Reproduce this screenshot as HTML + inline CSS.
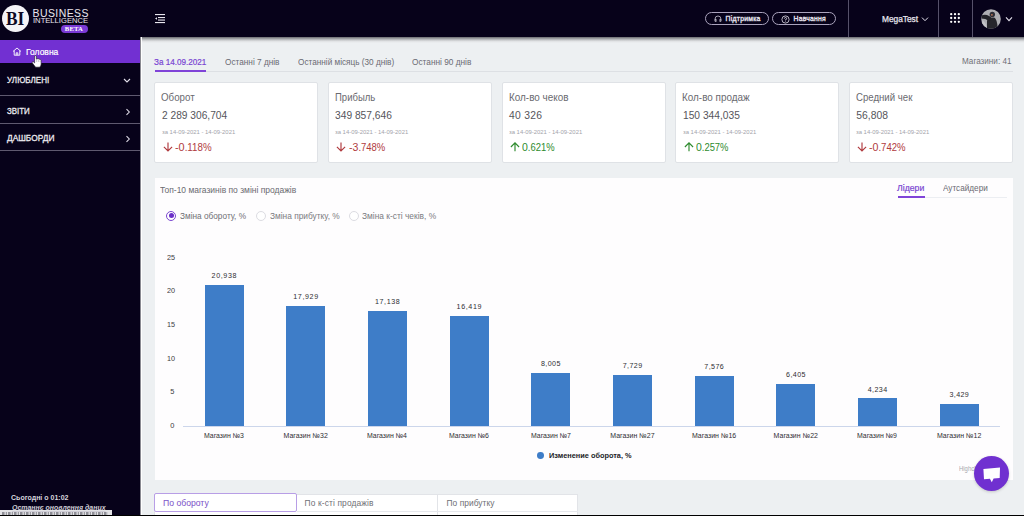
<!DOCTYPE html>
<html><head><meta charset="utf-8">
<style>
*{margin:0;padding:0;box-sizing:border-box}
html,body{width:1024px;height:516px;overflow:hidden}
body{position:relative;background:#edf0f2;font-family:"Liberation Sans",sans-serif}
.a{position:absolute}
.t{position:absolute;white-space:pre}
.bar{position:absolute;background:#3e7dc8}
.card{position:absolute;background:#fff;border:1px solid #dfe2e6;border-radius:2px}
</style></head><body>
<!-- header -->
<div class="a" style="left:0;top:0;width:1024px;height:37px;background:#07021a"></div>
<div class="a" style="left:140px;top:36.6px;width:884px;height:6px;background:linear-gradient(#6a6a70 0%,#9a9ca0 25%,#c6c8ca 50%,#e2e4e6 75%,#edf0f2 100%)"></div>
<!-- sidebar -->
<div class="a" style="left:0;top:37px;width:140px;height:479px;background:#07021a"></div>
<div class="a" style="left:140px;top:37px;width:1px;height:479px;background:#8a8a92"></div>
<div class="a" style="left:141px;top:37px;width:1px;height:479px;background:#ffffff"></div>
<div class="a" style="left:0;top:39.6px;width:140px;height:23.5px;background:#7230d2"></div>
<div class="a" style="left:0;top:95px;width:140px;height:1px;background:#5f5a70"></div>
<div class="a" style="left:0;top:122.7px;width:140px;height:1px;background:#5f5a70"></div>
<div class="a" style="left:0;top:150px;width:140px;height:1px;background:#5f5a70"></div>
<!-- logo -->
<div class="a" style="left:1.8px;top:4.9px;width:27.4px;height:27.4px;border-radius:50%;background:#f4f3f7"></div>
<div class="a" style="left:60.5px;top:25.2px;width:27px;height:7.8px;border-radius:4px;background:#7a3ad6"></div>
<!-- hamburger -->
<svg class="a" style="left:154px;top:13px" width="13" height="11" viewBox="0 0 13 11">
<rect x="1" y="1" width="10" height="1.1" fill="#e8e6ee"/>
<rect x="4" y="4" width="7" height="1.1" fill="#e8e6ee"/>
<rect x="4" y="6.5" width="7" height="1.1" fill="#e8e6ee"/>
<rect x="1" y="9" width="10" height="1.1" fill="#e8e6ee"/>
<path d="M1 5.5 L3 4.2 L3 6.8 Z" fill="#e8e6ee"/>
</svg>
<!-- header buttons -->
<div class="a" style="left:705px;top:12px;width:64px;height:12.8px;border:1px solid #aaa3bd;border-radius:7px"></div>
<div class="a" style="left:772.4px;top:12px;width:63.3px;height:12.8px;border:1px solid #aaa3bd;border-radius:7px"></div>
<svg class="a" style="left:713.5px;top:14.5px" width="8" height="7" viewBox="0 0 8 7">
<path d="M1.1 5.8 V3.9 A2.9 2.9 0 0 1 6.9 3.9 V5.8" fill="none" stroke="#e4e1ec" stroke-width="0.7"/>
<path d="M1.1 4.3 H2.2 V6.5 H1.1 Z M5.8 4.3 H6.9 V6.5 H5.8 Z" fill="none" stroke="#e4e1ec" stroke-width="0.6"/>
</svg>
<svg class="a" style="left:781px;top:14.5px" width="9" height="9" viewBox="0 0 9 9">
<circle cx="4.5" cy="4.5" r="3.6" fill="none" stroke="#e4e1ec" stroke-width="0.8"/>
<path d="M3.4 3.6 A1.1 1.1 0 1 1 4.5 4.7 V5.4" fill="none" stroke="#e4e1ec" stroke-width="0.8"/>
<circle cx="4.5" cy="6.4" r="0.45" fill="#e4e1ec"/>
</svg>
<!-- header dividers -->
<div class="a" style="left:847.5px;top:0;width:1.2px;height:37px;background:#56516a"></div>
<div class="a" style="left:938px;top:0;width:1.2px;height:37px;background:#56516a"></div>
<div class="a" style="left:972px;top:0;width:1.2px;height:37px;background:#56516a"></div>
<svg class="a" style="left:920px;top:16px" width="10" height="7" viewBox="0 0 10 7">
<path d="M2 1.6 L5 4.7 L8 1.6" fill="none" stroke="#e4e1ec" stroke-width="1"/></svg>
<svg class="a" style="left:1004px;top:16px" width="10" height="7" viewBox="0 0 10 7">
<path d="M2 1.4 L5 4.6 L8 1.4" fill="none" stroke="#e4e1ec" stroke-width="1.1"/></svg>
<svg class="a" style="left:950.4px;top:13.2px" width="10" height="10" viewBox="0 0 10 10" fill="#ffffff">
<circle cx="1.2" cy="1.2" r="1.15"/><circle cx="5" cy="1.2" r="1.15"/><circle cx="8.8" cy="1.2" r="1.15"/>
<circle cx="1.2" cy="5" r="1.15"/><circle cx="5" cy="5" r="1.15"/><circle cx="8.8" cy="5" r="1.15"/>
<circle cx="1.2" cy="8.8" r="1.15"/><circle cx="5" cy="8.8" r="1.15"/><circle cx="8.8" cy="8.8" r="1.15"/>
</svg>
<!-- avatar -->
<svg class="a" style="left:981.2px;top:8.8px" width="20" height="20" viewBox="0 0 20 20">
<defs><clipPath id="cc"><circle cx="10" cy="10" r="9.8"/></clipPath></defs>
<circle cx="10" cy="10" r="9.8" fill="#aeaeb3"/>
<g clip-path="url(#cc)">
<path d="M6 20 L6 12 Q6.5 8.6 10 8.6 L13.2 8.6 Q16.2 10 16.8 20 Z" fill="#26262c"/>
<path d="M0.3 6.6 Q3 5.4 6 6.1 L10 8 L9 12.5 L4.2 10 L0.3 9.6 Z" fill="#222228"/>
<circle cx="11.3" cy="5.4" r="2.7" fill="#2e2e36"/>
<circle cx="10.9" cy="5.8" r="0.9" fill="#c07858"/>
<path d="M1.5 11 Q5 13.5 6 20 L0 20 Z" fill="#c4c4c8"/>
</g></svg>
<!-- sidebar icons -->
<svg class="a" style="left:11.5px;top:47px" width="10" height="9" viewBox="0 0 10 9">
<path d="M1 4.5 L5 1 L9 4.5 M2.2 3.6 V8.2 H7.8 V3.6 M4.2 8.2 V5.8 H5.8 V8.2" fill="none" stroke="#ffffff" stroke-width="0.9"/></svg>
<svg class="a" style="left:123px;top:76.5px" width="8" height="7" viewBox="0 0 8 7">
<path d="M1 2 L4 5 L7 2" fill="none" stroke="#e4e1ec" stroke-width="1.1"/></svg>
<svg class="a" style="left:124.5px;top:107.5px" width="6" height="8" viewBox="0 0 6 8">
<path d="M1.5 1.2 L4.3 4 L1.5 6.8" fill="none" stroke="#e4e1ec" stroke-width="1.05"/></svg>
<svg class="a" style="left:124.5px;top:135.2px" width="6" height="8" viewBox="0 0 6 8">
<path d="M1.5 1.2 L4.3 4 L1.5 6.8" fill="none" stroke="#e4e1ec" stroke-width="1.05"/></svg>
<!-- cursor -->
<svg class="a" style="left:31px;top:54px" width="12" height="14" viewBox="0 0 12 14">
<path d="M3.6 2 Q4.4 0.9 5.3 2 L5.4 5.2 Q6.1 4.5 7 4.9 Q7.8 4.6 8.5 5.3 Q9.5 5.1 10.1 6.2 L10.2 10 Q10 12.3 8.6 13.2 L4.6 13.2 L1.2 8.8 Q0.8 7.4 2.3 7.7 L3.6 8.9 Z" fill="#ffffff" stroke="#1a1a22" stroke-width="0.6"/>
<path d="M5.6 6 L5.6 8 M7.4 5.8 L7.4 8 M9.1 6.4 L9.1 8" stroke="#9a9aa2" stroke-width="0.5"/>
</svg>
<!-- status bar -->
<div class="a" style="left:0;top:509.8px;width:112.4px;height:5.4px;background:#e2e2e5"></div>
<div class="a" style="left:2px;top:512.4px;width:106px;height:2.6px;background:repeating-linear-gradient(90deg,#8e8e96 0 2px,#b4b4ba 2px 3px,#d0d0d5 3px 4px,#9a9aa0 4px 5px,#e2e2e5 5px 6px)"></div>
<!-- tabs -->
<div class="a" style="left:155px;top:70.6px;width:858px;height:1px;background:#dde0e4"></div>
<div class="a" style="left:154.8px;top:69.8px;width:51.4px;height:2px;background:#8044d8"></div>
<!-- cards -->
<div class="card" style="left:154.4px;top:81.8px;width:164px;height:81.2px"></div>
<div class="card" style="left:328.0px;top:81.8px;width:164px;height:81.2px"></div>
<div class="card" style="left:501.6px;top:81.8px;width:164px;height:81.2px"></div>
<div class="card" style="left:675.2px;top:81.8px;width:164px;height:81.2px"></div>
<div class="card" style="left:848.8px;top:81.8px;width:164px;height:81.2px"></div>
<!-- card arrows -->
<svg class="a" style="left:162.80px;top:142.2px" width="10" height="10" viewBox="0 0 10 10"><path d="M5 0.6 V8.8 M0.9 4.8 L5 8.9 L9.1 4.8" fill="none" stroke="#b03a3e" stroke-width="1.15"/></svg>
<svg class="a" style="left:336.40px;top:142.2px" width="10" height="10" viewBox="0 0 10 10"><path d="M5 0.6 V8.8 M0.9 4.8 L5 8.9 L9.1 4.8" fill="none" stroke="#b03a3e" stroke-width="1.15"/></svg>
<svg class="a" style="left:510.00px;top:142.2px" width="10" height="10" viewBox="0 0 10 10"><path d="M5 1.0 V9.2 M0.9 5.0 L5 0.9 L9.1 5.0" fill="none" stroke="#2e8b2e" stroke-width="1.15"/></svg>
<svg class="a" style="left:683.60px;top:142.2px" width="10" height="10" viewBox="0 0 10 10"><path d="M5 1.0 V9.2 M0.9 5.0 L5 0.9 L9.1 5.0" fill="none" stroke="#2e8b2e" stroke-width="1.15"/></svg>
<svg class="a" style="left:857.20px;top:142.2px" width="10" height="10" viewBox="0 0 10 10"><path d="M5 0.6 V8.8 M0.9 4.8 L5 8.9 L9.1 4.8" fill="none" stroke="#b03a3e" stroke-width="1.15"/></svg>

<!-- chart panel -->
<div class="a" style="left:154.5px;top:177.5px;width:858.5px;height:302px;background:#fefdfe"></div>
<div class="a" style="left:898px;top:196.5px;width:109px;height:1px;background:#eceef2"></div>
<div class="a" style="left:898px;top:195.8px;width:26.5px;height:2px;background:#8044d8"></div>
<!-- radios -->
<div class="a" style="left:166px;top:210.5px;width:10.2px;height:10.2px;border:1px solid #7a45d0;border-radius:50%;background:#fff"></div>
<div class="a" style="left:168.6px;top:213.1px;width:5px;height:5px;border-radius:50%;background:#6a2fc8"></div>
<div class="a" style="left:256px;top:210.5px;width:10.2px;height:10.2px;border:1px solid #dcdce2;border-radius:50%;background:#fff"></div>
<div class="a" style="left:349px;top:210.5px;width:10.2px;height:10.2px;border:1px solid #dcdce2;border-radius:50%;background:#fff"></div>
<!-- axis -->
<div class="a" style="left:183.3px;top:425.8px;width:817px;height:1px;background:#ccd6eb"></div>
<div class="bar" style="left:204.50px;top:285.14px;width:39.00px;height:141.26px"></div><div class="bar" style="left:286.18px;top:305.54px;width:39.00px;height:120.86px"></div><div class="bar" style="left:367.86px;top:310.90px;width:39.00px;height:115.50px"></div><div class="bar" style="left:449.54px;top:315.78px;width:39.00px;height:110.62px"></div><div class="bar" style="left:531.22px;top:372.83px;width:39.00px;height:53.57px"></div><div class="bar" style="left:612.90px;top:374.70px;width:39.00px;height:51.70px"></div><div class="bar" style="left:694.58px;top:375.73px;width:39.00px;height:50.67px"></div><div class="bar" style="left:776.26px;top:383.67px;width:39.00px;height:42.73px"></div><div class="bar" style="left:857.94px;top:398.39px;width:39.00px;height:28.01px"></div><div class="bar" style="left:939.62px;top:403.85px;width:39.00px;height:22.55px"></div>
<div class="a" style="left:537.3px;top:452.2px;width:6.8px;height:6.8px;border-radius:50%;background:#3e7dc8"></div>
<!-- bottom tabs -->
<div class="a" style="left:154px;top:493.5px;width:424px;height:24px;background:#fff;border:1px solid #e2e4e8"></div>
<div class="a" style="left:437.2px;top:494px;width:1px;height:22px;background:#e2e4e8"></div>
<div class="a" style="left:297px;top:511.2px;width:281px;height:1px;background:#e6e8ec"></div>
<div class="a" style="left:154px;top:493.3px;width:142.8px;height:18.5px;border:1.1px solid #b89ee6;border-radius:2px;background:#fff"></div>
<span class="t" style="left:6.23px;top:8.58px;font-size:19.49px;line-height:19.49px;color:#0d0822;transform:scaleX(0.8874);transform-origin:0 0;font-weight:700;font-family:'Liberation Serif',serif">BI</span>
<span class="t" style="left:32.57px;top:8.84px;font-size:10.47px;line-height:10.47px;color:#e9e7ef;letter-spacing:0.429px">BUSINESS</span>
<span class="t" style="left:32.71px;top:17.24px;font-size:8.10px;line-height:8.10px;color:#e9e7ef;transform:scaleX(0.9424);transform-origin:0 0">INTELLIGENCE</span>
<span class="t" style="left:64.80px;top:26.03px;font-size:6.65px;line-height:6.65px;color:#ffffff;letter-spacing:0.168px;font-weight:700;font-family:'Liberation Serif',serif">BETA</span>
<span class="t" style="left:725.59px;top:15.91px;font-size:6.84px;line-height:6.84px;color:#e4e1ec;letter-spacing:0.255px;-webkit-text-stroke:0.35px #e4e1ec">Підтримка</span>
<span class="t" style="left:793.59px;top:15.91px;font-size:6.84px;line-height:6.84px;color:#e4e1ec;letter-spacing:0.209px;-webkit-text-stroke:0.35px #e4e1ec">Навчання</span>
<span class="t" style="left:881.80px;top:14.71px;font-size:8.38px;line-height:8.38px;color:#e9e7ef;transform:scaleX(0.9941);transform-origin:0 0;-webkit-text-stroke:0.25px #e9e7ef">MegaTest</span>
<span class="t" style="left:26.14px;top:48.38px;font-size:9.36px;line-height:9.36px;color:#ffffff;transform:scaleX(0.9105);transform-origin:0 0;-webkit-text-stroke:0.2px #ffffff">Головна</span>
<span class="t" style="left:7.24px;top:75.58px;font-size:9.36px;line-height:9.36px;color:#ecebf0;transform:scaleX(0.8618);transform-origin:0 0;-webkit-text-stroke:0.3px #ecebf0">УЛЮБЛЕНІ</span>
<span class="t" style="left:7.14px;top:106.58px;font-size:9.36px;line-height:9.36px;color:#ecebf0;transform:scaleX(0.8455);transform-origin:0 0;-webkit-text-stroke:0.3px #ecebf0">ЗВІТИ</span>
<span class="t" style="left:7.14px;top:134.48px;font-size:9.36px;line-height:9.36px;color:#ecebf0;transform:scaleX(0.8931);transform-origin:0 0;-webkit-text-stroke:0.3px #ecebf0">ДАШБОРДИ</span>
<span class="t" style="left:11.27px;top:494.97px;font-size:7.12px;line-height:7.12px;color:#d8d6de;transform:scaleX(0.9864);transform-origin:0 0;font-weight:700">Сьогодні о 01:02</span>
<span class="t" style="left:11.54px;top:504.00px;font-size:7.68px;line-height:7.68px;color:#cfcdd6;transform:scaleX(0.9069);transform-origin:0 0;font-weight:700;font-style:italic;text-decoration:underline">Останнє оновлення даних</span>
<span class="t" style="left:154.06px;top:57.93px;font-size:8.94px;line-height:8.94px;color:#7a45d2;transform:scaleX(0.9112);transform-origin:0 0;-webkit-text-stroke:0.2px #7a45d2">За 14.09.2021</span>
<span class="t" style="left:224.96px;top:57.93px;font-size:8.94px;line-height:8.94px;color:#6b6b73;transform:scaleX(0.9241);transform-origin:0 0">Останні 7 днів</span>
<span class="t" style="left:298.26px;top:57.93px;font-size:8.94px;line-height:8.94px;color:#6b6b73;transform:scaleX(0.9205);transform-origin:0 0">Останній місяць (30 днів)</span>
<span class="t" style="left:412.16px;top:57.93px;font-size:8.94px;line-height:8.94px;color:#6b6b73;transform:scaleX(0.9276);transform-origin:0 0">Останні 90 днів</span>
<span class="t" style="left:962.48px;top:57.47px;font-size:8.66px;line-height:8.66px;color:#6f6f76;transform:scaleX(0.9393);transform-origin:0 0">Магазини: 41</span>
<span class="t" style="left:161.49px;top:93.17px;font-size:10.20px;line-height:10.20px;color:#6a6a70;transform:scaleX(0.9565);transform-origin:0 0">Оборот</span>
<span class="t" style="left:161.88px;top:111.25px;font-size:10.34px;line-height:10.34px;color:#55555b;transform:scaleX(0.9873);transform-origin:0 0">2 289 306,704</span>
<span class="t" style="left:161.74px;top:129.01px;font-size:6.01px;line-height:6.01px;color:#a3a3aa;transform:scaleX(0.9829);transform-origin:0 0">за 14-09-2021 - 14-09-2021</span>
<span class="t" style="left:174.92px;top:141.93px;font-size:11.31px;line-height:11.31px;color:#b03a3e;transform:scaleX(0.9609);transform-origin:0 0">-0<span style="font-size:90%">.118%</span></span>
<span class="t" style="left:335.09px;top:93.17px;font-size:10.20px;line-height:10.20px;color:#6a6a70;transform:scaleX(0.9338);transform-origin:0 0">Прибыль</span>
<span class="t" style="left:335.48px;top:111.25px;font-size:10.34px;line-height:10.34px;color:#55555b;transform:scaleX(0.9912);transform-origin:0 0">349 857,646</span>
<span class="t" style="left:335.34px;top:129.01px;font-size:6.01px;line-height:6.01px;color:#a3a3aa;transform:scaleX(0.9829);transform-origin:0 0">за 14-09-2021 - 14-09-2021</span>
<span class="t" style="left:348.52px;top:141.93px;font-size:11.31px;line-height:11.31px;color:#b03a3e;transform:scaleX(0.9333);transform-origin:0 0">-3<span style="font-size:90%">.748%</span></span>
<span class="t" style="left:508.69px;top:93.17px;font-size:10.20px;line-height:10.20px;color:#6a6a70;transform:scaleX(0.9730);transform-origin:0 0">Кол-во чеков</span>
<span class="t" style="left:509.08px;top:111.25px;font-size:10.34px;line-height:10.34px;color:#55555b;letter-spacing:0.249px">40 326</span>
<span class="t" style="left:508.94px;top:129.01px;font-size:6.01px;line-height:6.01px;color:#a3a3aa;transform:scaleX(0.9829);transform-origin:0 0">за 14-09-2021 - 14-09-2021</span>
<span class="t" style="left:522.12px;top:141.93px;font-size:11.31px;line-height:11.31px;color:#2e8b2e;transform:scaleX(0.9273);transform-origin:0 0">0<span style="font-size:90%">.621%</span></span>
<span class="t" style="left:682.29px;top:93.17px;font-size:10.20px;line-height:10.20px;color:#6a6a70;transform:scaleX(0.9731);transform-origin:0 0">Кол-во продаж</span>
<span class="t" style="left:682.68px;top:111.25px;font-size:10.34px;line-height:10.34px;color:#55555b;transform:scaleX(0.9894);transform-origin:0 0">150 344,035</span>
<span class="t" style="left:682.54px;top:129.01px;font-size:6.01px;line-height:6.01px;color:#a3a3aa;transform:scaleX(0.9829);transform-origin:0 0">за 14-09-2021 - 14-09-2021</span>
<span class="t" style="left:695.72px;top:141.93px;font-size:11.31px;line-height:11.31px;color:#2e8b2e;transform:scaleX(0.9244);transform-origin:0 0">0<span style="font-size:90%">.257%</span></span>
<span class="t" style="left:855.89px;top:93.17px;font-size:10.20px;line-height:10.20px;color:#6a6a70;transform:scaleX(0.9442);transform-origin:0 0">Средний чек</span>
<span class="t" style="left:856.28px;top:111.25px;font-size:10.34px;line-height:10.34px;color:#55555b;letter-spacing:0.029px">56,808</span>
<span class="t" style="left:856.14px;top:129.01px;font-size:6.01px;line-height:6.01px;color:#a3a3aa;transform:scaleX(0.9829);transform-origin:0 0">за 14-09-2021 - 14-09-2021</span>
<span class="t" style="left:869.32px;top:141.93px;font-size:11.31px;line-height:11.31px;color:#b03a3e;transform:scaleX(0.9413);transform-origin:0 0">-0<span style="font-size:90%">.742%</span></span>
<span class="t" style="left:160.28px;top:186.47px;font-size:8.66px;line-height:8.66px;color:#6a6a70;transform:scaleX(0.9789);transform-origin:0 0">Топ-10 магазинів по зміні продажів</span>
<span class="t" style="left:897.44px;top:183.98px;font-size:9.36px;line-height:9.36px;color:#7a45d2;transform:scaleX(0.9305);transform-origin:0 0;-webkit-text-stroke:0.2px #7a45d2">Лідери</span>
<span class="t" style="left:943.04px;top:183.98px;font-size:9.36px;line-height:9.36px;color:#6b6b73;transform:scaleX(0.8757);transform-origin:0 0">Аутсайдери</span>
<span class="t" style="left:180.44px;top:212.08px;font-size:9.36px;line-height:9.36px;color:#707076;transform:scaleX(0.8840);transform-origin:0 0">Зміна обороту, %</span>
<span class="t" style="left:270.04px;top:212.08px;font-size:9.36px;line-height:9.36px;color:#7c7c82;transform:scaleX(0.8924);transform-origin:0 0">Зміна прибутку, %</span>
<span class="t" style="left:362.04px;top:212.08px;font-size:9.36px;line-height:9.36px;color:#7c7c82;transform:scaleX(0.8969);transform-origin:0 0">Зміна к-сті чеків, %</span>
<span class="t" style="left:166.86px;top:253.69px;font-size:7.40px;line-height:7.40px;color:#3c3c40;transform:scaleX(0.9801);transform-origin:0 0">25</span>
<span class="t" style="left:166.86px;top:287.39px;font-size:7.40px;line-height:7.40px;color:#3c3c40;transform:scaleX(0.9801);transform-origin:0 0">20</span>
<span class="t" style="left:166.86px;top:321.09px;font-size:7.40px;line-height:7.40px;color:#3c3c40;transform:scaleX(0.9801);transform-origin:0 0">15</span>
<span class="t" style="left:166.86px;top:354.79px;font-size:7.40px;line-height:7.40px;color:#3c3c40;transform:scaleX(0.9801);transform-origin:0 0">10</span>
<span class="t" style="left:170.26px;top:388.49px;font-size:7.40px;line-height:7.40px;color:#3c3c40;letter-spacing:0.000px">5</span>
<span class="t" style="left:170.26px;top:422.19px;font-size:7.40px;line-height:7.40px;color:#3c3c40;letter-spacing:0.000px">0</span>
<span class="t" style="left:211.57px;top:273.31px;font-size:7.12px;line-height:7.12px;color:#2e2e33;letter-spacing:0.621px">20,938</span>
<span class="t" style="left:204.03px;top:431.69px;font-size:6.98px;line-height:6.98px;color:#2e2e33;transform:scaleX(0.9940);transform-origin:0 0">Магазин №3</span>
<span class="t" style="left:293.25px;top:293.71px;font-size:7.12px;line-height:7.12px;color:#2e2e33;letter-spacing:0.621px">17,929</span>
<span class="t" style="left:283.51px;top:431.69px;font-size:6.98px;line-height:6.98px;color:#2e2e33;letter-spacing:0.029px">Магазин №32</span>
<span class="t" style="left:374.93px;top:299.08px;font-size:7.12px;line-height:7.12px;color:#2e2e33;letter-spacing:0.621px">17,138</span>
<span class="t" style="left:367.39px;top:431.69px;font-size:6.98px;line-height:6.98px;color:#2e2e33;transform:scaleX(0.9940);transform-origin:0 0">Магазин №4</span>
<span class="t" style="left:456.61px;top:303.95px;font-size:7.12px;line-height:7.12px;color:#2e2e33;letter-spacing:0.621px">16,419</span>
<span class="t" style="left:449.07px;top:431.69px;font-size:6.98px;line-height:6.98px;color:#2e2e33;transform:scaleX(0.9940);transform-origin:0 0">Магазин №6</span>
<span class="t" style="left:540.99px;top:361.00px;font-size:7.12px;line-height:7.12px;color:#2e2e33;letter-spacing:0.414px">8,005</span>
<span class="t" style="left:530.75px;top:431.69px;font-size:6.98px;line-height:6.98px;color:#2e2e33;transform:scaleX(0.9940);transform-origin:0 0">Магазин №7</span>
<span class="t" style="left:622.67px;top:362.87px;font-size:7.12px;line-height:7.12px;color:#2e2e33;letter-spacing:0.414px">7,729</span>
<span class="t" style="left:610.23px;top:431.69px;font-size:6.98px;line-height:6.98px;color:#2e2e33;letter-spacing:0.029px">Магазин №27</span>
<span class="t" style="left:704.35px;top:363.91px;font-size:7.12px;line-height:7.12px;color:#2e2e33;letter-spacing:0.414px">7,576</span>
<span class="t" style="left:691.91px;top:431.69px;font-size:6.98px;line-height:6.98px;color:#2e2e33;letter-spacing:0.029px">Магазин №16</span>
<span class="t" style="left:786.03px;top:371.85px;font-size:7.12px;line-height:7.12px;color:#2e2e33;letter-spacing:0.414px">6,405</span>
<span class="t" style="left:773.59px;top:431.69px;font-size:6.98px;line-height:6.98px;color:#2e2e33;letter-spacing:0.029px">Магазин №22</span>
<span class="t" style="left:867.71px;top:386.57px;font-size:7.12px;line-height:7.12px;color:#2e2e33;letter-spacing:0.414px">4,234</span>
<span class="t" style="left:857.47px;top:431.69px;font-size:6.98px;line-height:6.98px;color:#2e2e33;transform:scaleX(0.9940);transform-origin:0 0">Магазин №9</span>
<span class="t" style="left:949.39px;top:392.02px;font-size:7.12px;line-height:7.12px;color:#2e2e33;letter-spacing:0.414px">3,429</span>
<span class="t" style="left:936.95px;top:431.69px;font-size:6.98px;line-height:6.98px;color:#2e2e33;letter-spacing:0.029px">Магазин №12</span>
<span class="t" style="left:548.55px;top:451.82px;font-size:7.54px;line-height:7.54px;color:#222226;transform:scaleX(0.9766);transform-origin:0 0;font-weight:700">Изменение оборота, %</span>
<span class="t" style="left:959.22px;top:465.68px;font-size:6.28px;line-height:6.28px;color:#a8a8ae;transform:scaleX(0.9444);transform-origin:0 0">Highcharts.com</span>
<span class="t" style="left:163.46px;top:499.43px;font-size:8.94px;line-height:8.94px;color:#7b52c8;transform:scaleX(0.9677);transform-origin:0 0">По обороту</span>
<span class="t" style="left:304.50px;top:499.21px;font-size:8.38px;line-height:8.38px;color:#6f6f76;letter-spacing:0.138px">По к-сті продажів</span>
<span class="t" style="left:446.50px;top:499.21px;font-size:8.38px;line-height:8.38px;color:#6f6f76;letter-spacing:0.054px">По прибутку</span>
<!-- chat bubble -->
<div class="a" style="left:974.2px;top:456px;width:35.2px;height:35.2px;border-radius:50%;background:#7030d0;box-shadow:0 1px 3px rgba(0,0,0,0.18)"></div>
<svg class="a" style="left:982px;top:465.6px" width="20" height="18" viewBox="0 0 20 18">
<path d="M1.4 3.0 L18.0 1.5 L17.7 12.0 L11.6 12.6 L9.8 16.2 L7.9 12.8 L2.0 13.2 Z" fill="#ffffff"/></svg>

<div class="a" style="left:0;top:515px;width:1024px;height:1px;background:#000"></div>
</body></html>
